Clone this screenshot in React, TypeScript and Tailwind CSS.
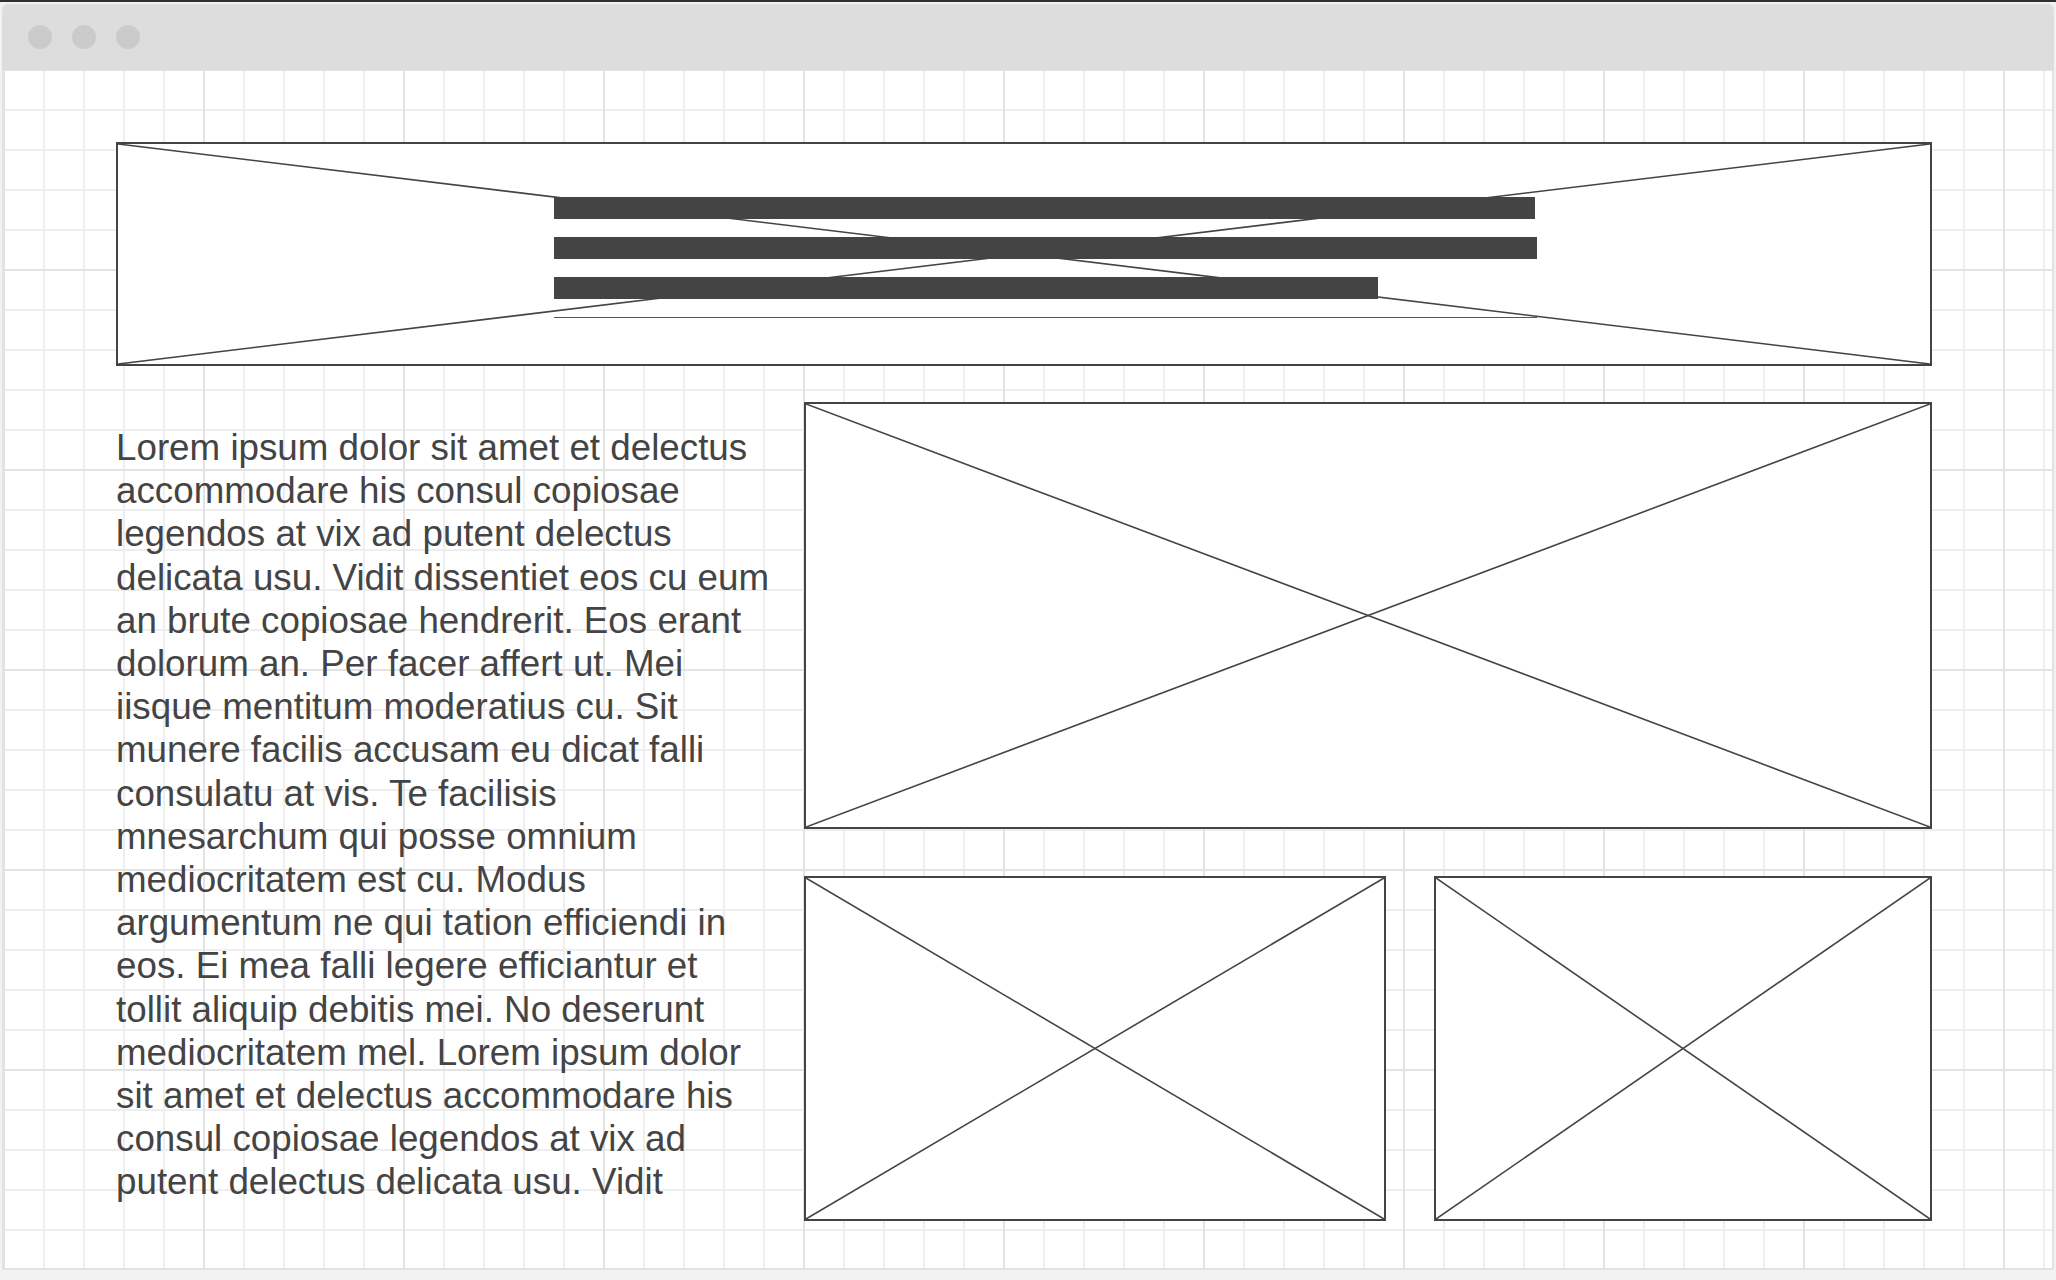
const lines = [
  "Lorem ipsum dolor sit amet et delectus",
  "accommodare his consul copiosae",
  "legendos at vix ad putent delectus",
  "delicata usu. Vidit dissentiet eos cu eum",
  "an brute copiosae hendrerit. Eos erant",
  "dolorum an. Per facer affert ut. Mei",
  "iisque mentitum moderatius cu. Sit",
  "munere facilis accusam eu dicat falli",
  "consulatu at vis. Te facilisis",
  "mnesarchum qui posse omnium",
  "mediocritatem est cu. Modus",
  "argumentum ne qui tation efficiendi in",
  "eos. Ei mea falli legere efficiantur et",
  "tollit aliquip debitis mei. No deserunt",
  "mediocritatem mel. Lorem ipsum dolor",
  "sit amet et delectus accommodare his",
  "consul copiosae legendos at vix ad",
  "putent delectus delicata usu. Vidit",
]

function Cross() {
  return (
    <svg className="pointer-events-none absolute inset-0 h-full w-full">
      <line x1="0" y1="0" x2="100%" y2="100%" stroke="#444444" strokeWidth="1.6" />
      <line x1="0" y1="100%" x2="100%" y2="0" stroke="#444444" strokeWidth="1.6" />
    </svg>
  )
}

function Placeholder({ className }: { className: string }) {
  return (
    <div className={`relative border-2 border-[#444444] bg-white ${className}`}>
      <Cross />
    </div>
  )
}

export default function App() {
  return (
    <div className="h-[1280px] w-[2056px] overflow-hidden bg-[#f2f2f2] font-['Liberation_Sans',Arial,sans-serif]">
      <div className="h-[2px] bg-[#2e3138]"></div>
      <div className="ml-[2px] mt-[2px] flex h-[1266px] w-[2052px] flex-col overflow-hidden rounded-t-[6px] bg-[#dddddd]">
        {/* title bar */}
        <div className="flex h-[66px] shrink-0 items-center gap-[20px] pl-[26px]">
          <div className="h-[24px] w-[24px] rounded-full bg-[#cbcbcb]"></div>
          <div className="h-[24px] w-[24px] rounded-full bg-[#cbcbcb]"></div>
          <div className="h-[24px] w-[24px] rounded-full bg-[#cbcbcb]"></div>
        </div>

        {/* canvas */}
        <div className="flex-1 border-x-2 border-b-2 border-[#e2e2e2] bg-white bg-[linear-gradient(to_right,#e3e3e3_2px,transparent_2px),linear-gradient(to_bottom,#e3e3e3_2px,transparent_2px),linear-gradient(to_right,#eeeeee_2px,transparent_2px),linear-gradient(to_bottom,#eeeeee_2px,transparent_2px)] bg-[size:200px_200px,200px_200px,40px_40px,40px_40px] bg-[position:-1px_-1px] pl-[112px] pt-[72px]">
          {/* header */}
          <div className="relative h-[224px] w-[1816px] border-2 border-[#444444] bg-white">
            <Cross />
            <div className="relative flex flex-col gap-[18px] pl-[436px] pt-[53px]">
              <div className="h-[22px] w-[981px] bg-[#444444]"></div>
              <div className="h-[22px] w-[983px] bg-[#444444]"></div>
              <div className="h-[22px] w-[824px] bg-[#444444]"></div>
              <div className="h-px w-[983px] bg-[#555555]"></div>
            </div>
          </div>

          <div className="mt-[36px] flex">
            <div className="w-[688px] shrink-0 pt-[24px] text-[36.75px] leading-[43.2px] text-[#444444]">
              {lines.map((l) => (
                <div key={l} className="whitespace-nowrap">
                  {l}
                </div>
              ))}
            </div>

            <div className="flex w-[1128px] flex-col gap-[47px]">
              <Placeholder className="h-[427px]" />
              <div className="flex h-[345px] gap-[48px]">
                <Placeholder className="w-[582px]" />
                <Placeholder className="flex-1" />
              </div>
            </div>
          </div>
        </div>
      </div>
    </div>
  )
}
